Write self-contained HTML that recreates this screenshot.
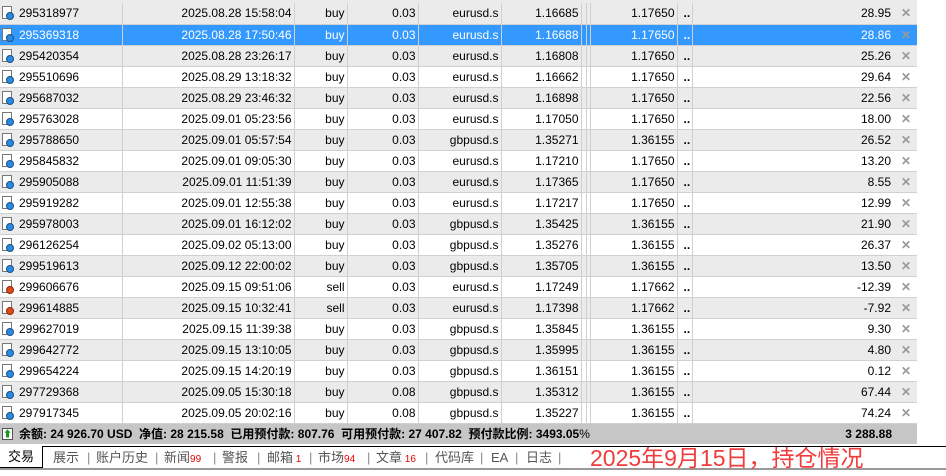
<!DOCTYPE html>
<html><head><meta charset="utf-8"><style>
*{margin:0;padding:0;box-sizing:border-box}
body{width:946px;height:476px;background:#fff;position:relative;overflow:hidden;font-family:"Liberation Sans","Noto Sans CJK SC",sans-serif;font-size:12px;color:#000}
table{position:absolute;left:0;top:3px;border-collapse:collapse;table-layout:fixed;width:917px}
td{height:21px;border:1px solid #d0d0d0;border-top:none;white-space:nowrap;text-align:right;padding:0 2px;overflow:hidden;line-height:20px}
tr:nth-child(odd) td{background:#ebebeb}
tr:nth-child(even) td{background:#fff}
tr.sel td{background:#3399ff;color:#fff}
td.id{text-align:left;padding-left:19px;position:relative;border-left:none}
td.d{text-align:left;padding-left:6px;font-weight:bold}
td.pr{padding-right:26px;position:relative;border-right:none}
.x{position:absolute;right:6px;top:0;color:#999;font-weight:bold}
.ic{position:absolute;left:2px;top:3px;width:10px;height:13px;border:1px solid #777;background:#fff}
.ic:after{content:"";position:absolute;right:-3px;bottom:-2px;width:6px;height:6px;border-radius:50%;background:#2a8ae0;border:1px solid #1b4f8a}
.ic.s:after{background:#e04a1a;border-color:#8a2a0a}
#top{position:absolute;left:0;top:0;width:917px;height:3px;background:#ebebeb}
#sum{position:absolute;left:0;top:424px;width:917px;height:20px;background:#c6c6c6;font-weight:bold;line-height:20px}
#tabs{position:absolute;left:0;top:446px;width:946px;height:24px;border-top:1px solid #000;border-bottom:2px solid #999;color:#555;font-size:13px;line-height:22px}
</style></head><body>
<div id="top"></div>
<table>
<colgroup><col style="width:122px"><col style="width:172px"><col style="width:53px"><col style="width:71px"><col style="width:83px"><col style="width:80px"><col style="width:5px"><col style="width:4px"><col style="width:87px"><col style="width:15px"><col style="width:225px"></colgroup>
<tr><td class="id"><span class="ic"></span>295318977</td><td>2025.08.28 15:58:04</td><td>buy</td><td>0.03</td><td>eurusd.s</td><td>1.16685</td><td></td><td></td><td>1.17650</td><td class="d">..</td><td class="pr">28.95<span class="x">✕</span></td></tr>
<tr class="sel"><td class="id"><span class="ic"></span>295369318</td><td>2025.08.28 17:50:46</td><td>buy</td><td>0.03</td><td>eurusd.s</td><td>1.16688</td><td></td><td></td><td>1.17650</td><td class="d">..</td><td class="pr">28.86<span class="x">✕</span></td></tr>
<tr><td class="id"><span class="ic"></span>295420354</td><td>2025.08.28 23:26:17</td><td>buy</td><td>0.03</td><td>eurusd.s</td><td>1.16808</td><td></td><td></td><td>1.17650</td><td class="d">..</td><td class="pr">25.26<span class="x">✕</span></td></tr>
<tr><td class="id"><span class="ic"></span>295510696</td><td>2025.08.29 13:18:32</td><td>buy</td><td>0.03</td><td>eurusd.s</td><td>1.16662</td><td></td><td></td><td>1.17650</td><td class="d">..</td><td class="pr">29.64<span class="x">✕</span></td></tr>
<tr><td class="id"><span class="ic"></span>295687032</td><td>2025.08.29 23:46:32</td><td>buy</td><td>0.03</td><td>eurusd.s</td><td>1.16898</td><td></td><td></td><td>1.17650</td><td class="d">..</td><td class="pr">22.56<span class="x">✕</span></td></tr>
<tr><td class="id"><span class="ic"></span>295763028</td><td>2025.09.01 05:23:56</td><td>buy</td><td>0.03</td><td>eurusd.s</td><td>1.17050</td><td></td><td></td><td>1.17650</td><td class="d">..</td><td class="pr">18.00<span class="x">✕</span></td></tr>
<tr><td class="id"><span class="ic"></span>295788650</td><td>2025.09.01 05:57:54</td><td>buy</td><td>0.03</td><td>gbpusd.s</td><td>1.35271</td><td></td><td></td><td>1.36155</td><td class="d">..</td><td class="pr">26.52<span class="x">✕</span></td></tr>
<tr><td class="id"><span class="ic"></span>295845832</td><td>2025.09.01 09:05:30</td><td>buy</td><td>0.03</td><td>eurusd.s</td><td>1.17210</td><td></td><td></td><td>1.17650</td><td class="d">..</td><td class="pr">13.20<span class="x">✕</span></td></tr>
<tr><td class="id"><span class="ic"></span>295905088</td><td>2025.09.01 11:51:39</td><td>buy</td><td>0.03</td><td>eurusd.s</td><td>1.17365</td><td></td><td></td><td>1.17650</td><td class="d">..</td><td class="pr">8.55<span class="x">✕</span></td></tr>
<tr><td class="id"><span class="ic"></span>295919282</td><td>2025.09.01 12:55:38</td><td>buy</td><td>0.03</td><td>eurusd.s</td><td>1.17217</td><td></td><td></td><td>1.17650</td><td class="d">..</td><td class="pr">12.99<span class="x">✕</span></td></tr>
<tr><td class="id"><span class="ic"></span>295978003</td><td>2025.09.01 16:12:02</td><td>buy</td><td>0.03</td><td>gbpusd.s</td><td>1.35425</td><td></td><td></td><td>1.36155</td><td class="d">..</td><td class="pr">21.90<span class="x">✕</span></td></tr>
<tr><td class="id"><span class="ic"></span>296126254</td><td>2025.09.02 05:13:00</td><td>buy</td><td>0.03</td><td>gbpusd.s</td><td>1.35276</td><td></td><td></td><td>1.36155</td><td class="d">..</td><td class="pr">26.37<span class="x">✕</span></td></tr>
<tr><td class="id"><span class="ic"></span>299519613</td><td>2025.09.12 22:00:02</td><td>buy</td><td>0.03</td><td>gbpusd.s</td><td>1.35705</td><td></td><td></td><td>1.36155</td><td class="d">..</td><td class="pr">13.50<span class="x">✕</span></td></tr>
<tr><td class="id"><span class="ic s"></span>299606676</td><td>2025.09.15 09:51:06</td><td>sell</td><td>0.03</td><td>eurusd.s</td><td>1.17249</td><td></td><td></td><td>1.17662</td><td class="d">..</td><td class="pr">-12.39<span class="x">✕</span></td></tr>
<tr><td class="id"><span class="ic s"></span>299614885</td><td>2025.09.15 10:32:41</td><td>sell</td><td>0.03</td><td>eurusd.s</td><td>1.17398</td><td></td><td></td><td>1.17662</td><td class="d">..</td><td class="pr">-7.92<span class="x">✕</span></td></tr>
<tr><td class="id"><span class="ic"></span>299627019</td><td>2025.09.15 11:39:38</td><td>buy</td><td>0.03</td><td>gbpusd.s</td><td>1.35845</td><td></td><td></td><td>1.36155</td><td class="d">..</td><td class="pr">9.30<span class="x">✕</span></td></tr>
<tr><td class="id"><span class="ic"></span>299642772</td><td>2025.09.15 13:10:05</td><td>buy</td><td>0.03</td><td>gbpusd.s</td><td>1.35995</td><td></td><td></td><td>1.36155</td><td class="d">..</td><td class="pr">4.80<span class="x">✕</span></td></tr>
<tr><td class="id"><span class="ic"></span>299654224</td><td>2025.09.15 14:20:19</td><td>buy</td><td>0.03</td><td>gbpusd.s</td><td>1.36151</td><td></td><td></td><td>1.36155</td><td class="d">..</td><td class="pr">0.12<span class="x">✕</span></td></tr>
<tr><td class="id"><span class="ic"></span>297729368</td><td>2025.09.05 15:30:18</td><td>buy</td><td>0.08</td><td>gbpusd.s</td><td>1.35312</td><td></td><td></td><td>1.36155</td><td class="d">..</td><td class="pr">67.44<span class="x">✕</span></td></tr>
<tr><td class="id"><span class="ic"></span>297917345</td><td>2025.09.05 20:02:16</td><td>buy</td><td>0.08</td><td>gbpusd.s</td><td>1.35227</td><td></td><td></td><td>1.36155</td><td class="d">..</td><td class="pr">74.24<span class="x">✕</span></td></tr>
</table>
<div id="sum">
<span style="position:absolute;left:2px;top:4px;width:11px;height:12px;border:1px solid #555;background:#fff;color:#1a9a1a;font-size:9px;line-height:10px;text-align:center">⬆</span>
<span style="position:absolute;left:19px">余额: 24 926.70 USD&nbsp; 净值: 28 215.58&nbsp; 已用预付款: 807.76&nbsp; 可用预付款: 27 407.82&nbsp; 预付款比例: 3493.05<span style="font-weight:normal">%</span></span>
<span style="position:absolute;right:25px">3 288.88</span>
</div>
<div id="tabs">
<span style="position:absolute;left:0;top:-1px;width:43px;height:22px;background:#fff;border-right:1px solid #000;border-bottom:1px solid #000;color:#000;text-align:center">交易</span>
<span style="position:absolute;left:53px">展示</span>
<span style="position:absolute;left:87px;color:#888">|</span>
<span style="position:absolute;left:96px">账户历史</span>
<span style="position:absolute;left:155px;color:#888">|</span>
<span style="position:absolute;left:164px">新闻<span style="color:#e00;font-size:10px">99</span></span>
<span style="position:absolute;left:213px;color:#888">|</span>
<span style="position:absolute;left:222px">警报</span>
<span style="position:absolute;left:257px;color:#888">|</span>
<span style="position:absolute;left:267px">邮箱<span style="color:#e00;font-size:10px"> 1</span></span>
<span style="position:absolute;left:309px;color:#888">|</span>
<span style="position:absolute;left:318px">市场<span style="color:#e00;font-size:10px">94</span></span>
<span style="position:absolute;left:367px;color:#888">|</span>
<span style="position:absolute;left:376px">文章<span style="color:#e00;font-size:10px"> 16</span></span>
<span style="position:absolute;left:425px;color:#888">|</span>
<span style="position:absolute;left:435px">代码库</span>
<span style="position:absolute;left:480px;color:#888">|</span>
<span style="position:absolute;left:491px">EA</span>
<span style="position:absolute;left:515px;color:#888">|</span>
<span style="position:absolute;left:526px">日志</span>
<span style="position:absolute;left:558px;color:#888">|</span>
<span style="position:absolute;left:590px;top:-3px;color:#f03c3c;font-size:23px;line-height:28px">2025年9月15日，持仓情况</span>
</div>
</body></html>
